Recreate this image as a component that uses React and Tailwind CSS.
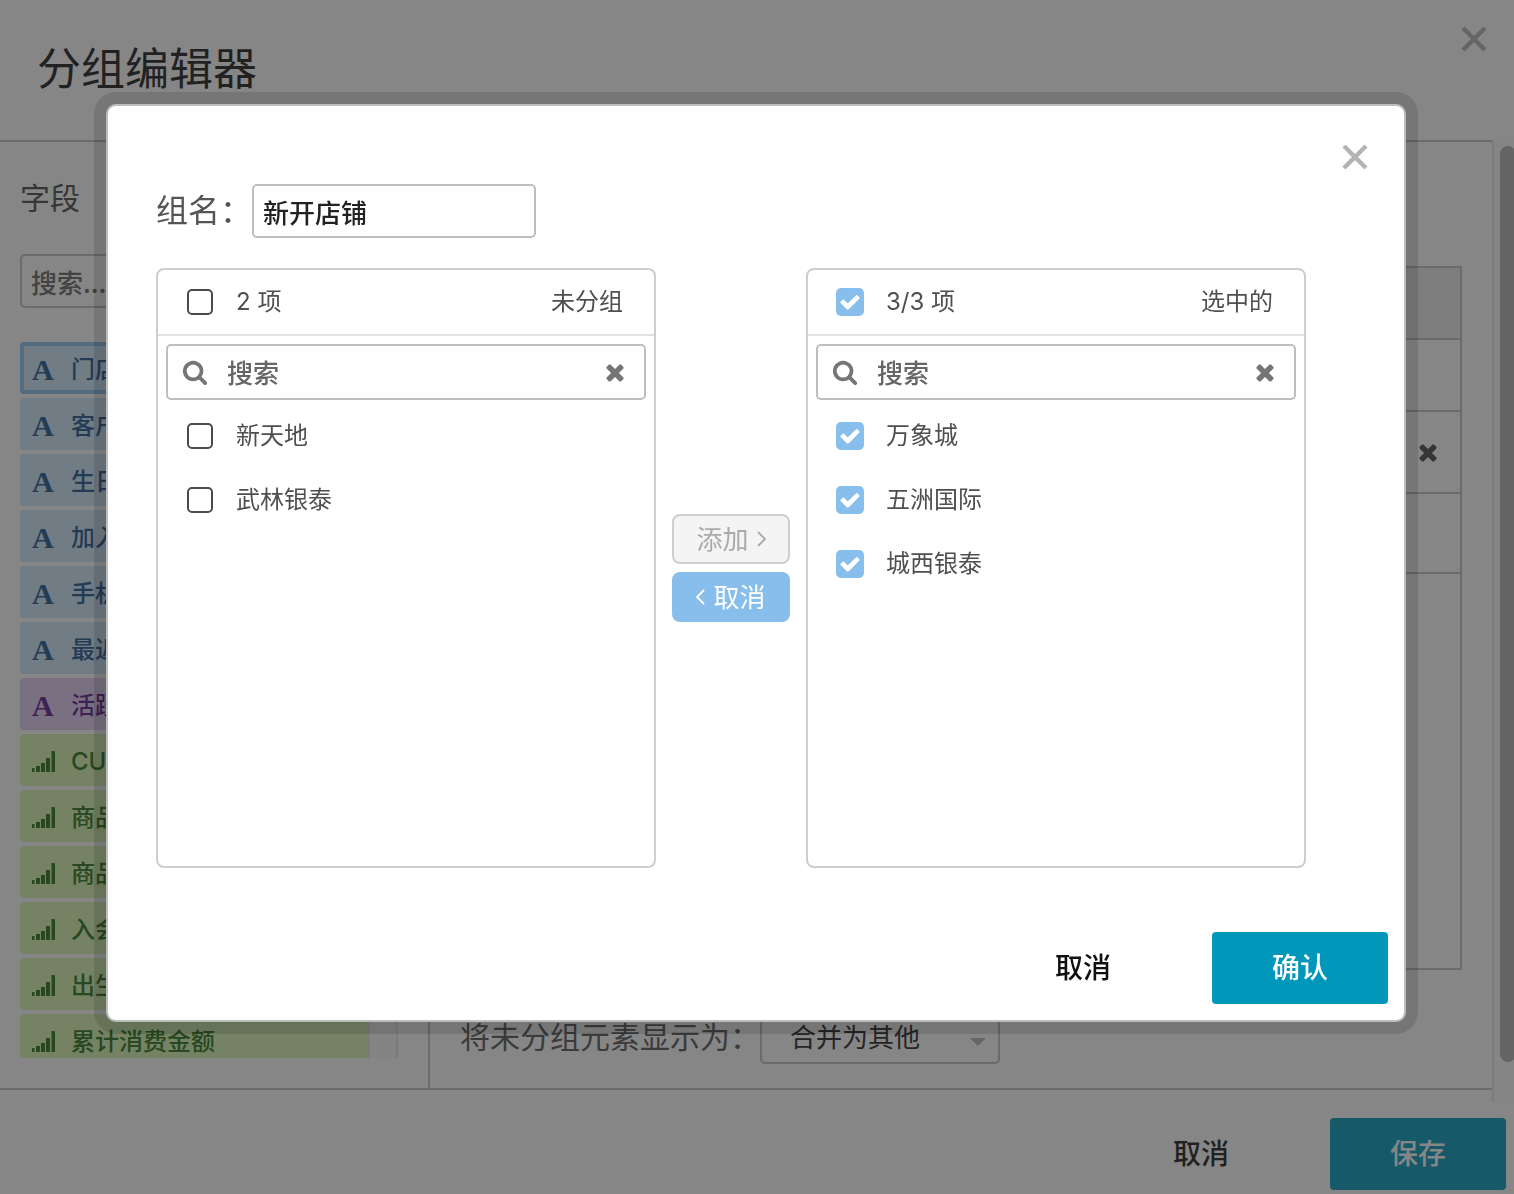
import React, { useState } from "react";

const fields = [
  { name: "门店", type: "text", active: true },
  { name: "客户", type: "text" },
  { name: "生日", type: "text" },
  { name: "加入", type: "text" },
  { name: "手机", type: "text" },
  { name: "最近", type: "text" },
  { name: "活跃", type: "group" },
  { name: "CUS", type: "number" },
  { name: "商品", type: "number" },
  { name: "商品", type: "number" },
  { name: "入会", type: "number" },
  { name: "出生", type: "number" },
  { name: "累计消费金额", type: "number" },
];

const fieldStyles = {
  text: "bg-[#cfe8fc] text-[#205691]",
  group: "bg-[#e1cdf5] text-[#5b1788]",
  number: "bg-[#d8f8b1] text-[#277217]",
};

const CloseIcon = () => (
  <svg className="size-7" viewBox="0 0 28 28" fill="none" stroke="currentColor" strokeWidth="4.5">
    <path d="M3 3l22 22M25 3L3 25" />
  </svg>
);

const TimesIcon = () => (
  <svg className="size-[26px]" viewBox="0 0 1792 1792" fill="currentColor">
    <path d="M1490 1322q0 40-28 68l-136 136q-28 28-68 28t-68-28l-294-294-294 294q-28 28-68 28t-68-28l-136-136q-28-28-28-68t28-68l294-294-294-294q-28-28-28-68t28-68l136-136q28-28 68-28t68 28l294 294 294-294q28-28 68-28t68 28l136 136q28 28 28 68t-28 68l-294 294 294 294q28 28 28 68z" />
  </svg>
);

const SearchIcon = () => (
  <svg className="size-[26px]" viewBox="0 0 1792 1792" fill="currentColor">
    <path d="M1216 832q0-185-131.5-316.5t-316.5-131.5-316.5 131.5-131.5 316.5 131.5 316.5 316.5 131.5 316.5-131.5 131.5-316.5zm512 832q0 52-38 90t-90 38q-54 0-90-38l-343-342q-179 124-399 124-143 0-273.5-55.5t-225-150-150-225-55.5-273.5 55.5-273.5 150-225 225-150 273.5-55.5 273.5 55.5 225 150 150 225 55.5 273.5q0 220-124 399l343 343q37 37 37 90z" />
  </svg>
);

const SignalIcon = () => (
  <svg className="h-[21px] w-6" viewBox="0 0 24 21" fill="currentColor">
    <rect x="0" y="17" width="2.5" height="4" />
    <rect x="4" y="15" width="4" height="6" />
    <rect x="9" y="12" width="4" height="9" />
    <rect x="14" y="7" width="4" height="14" />
    <rect x="19.5" y="0" width="3.5" height="21" />
  </svg>
);

const Chevron = ({ d }) => (
  <svg className="h-4 w-[9px]" viewBox="0 0 9 16" fill="none" stroke="currentColor" strokeWidth="1.8">
    <path d={d} />
  </svg>
);

const Checkbox = ({ checked, onChange }) => (
  <span className="grid size-7 shrink-0 place-items-center">
    <input
      type="checkbox"
      checked={checked}
      onChange={onChange}
      className="peer col-start-1 row-start-1 size-[26px] appearance-none rounded-[5px] border-2 border-[#4a4a4a] checked:size-7 checked:border-0 checked:bg-[#87beeb]"
    />
    <svg
      className="pointer-events-none col-start-1 row-start-1 hidden size-[22px] text-white peer-checked:block"
      viewBox="0 0 1792 1792"
      fill="currentColor"
    >
      <path d="M1671 566q0 40-28 68l-724 724-136 136q-28 28-68 28t-68-28l-136-136-362-362q-28-28-28-68t28-68l136-136q28-28 68-28t68 28l294 295 656-657q28-28 68-28t68 28l136 136q28 28 28 68z" />
    </svg>
  </span>
);

const FieldItem = ({ field }) => (
  <li
    className={`flex h-[52px] shrink-0 items-center rounded-sm border-4 pt-[3px] pl-2 text-2xl font-medium ${fieldStyles[field.type]} ${
      field.active ? "border-[#8bc3f0]" : "border-transparent"
    }`}
  >
    <span className="flex w-[39px] shrink-0 items-center">
      {field.type === "number" ? (
        <SignalIcon />
      ) : (
        <span className="font-['Liberation_Serif',serif] text-[30px] leading-8 font-bold">A</span>
      )}
    </span>
    {field.name}
  </li>
);

const TransferPanel = ({ title, items, selected, setSelected }) => {
  const [query, setQuery] = useState("");
  const allChecked = items.length > 0 && selected.length === items.length;
  const count = selected.length ? `${selected.length}/${items.length}` : items.length;

  const toggle = (item) =>
    setSelected(selected.includes(item) ? selected.filter((i) => i !== item) : [...selected, item]);

  return (
    <section className="h-[600px] flex-1 rounded-lg border-2 border-[#cecece] text-2xl text-[#4f4f4f]">
      <div className="flex h-[66px] items-center justify-between border-b-2 border-[#e2e2e2] pr-[31px] pl-7">
        <label className="flex items-center gap-[22px]">
          <Checkbox checked={allChecked} onChange={() => setSelected(allChecked ? [] : items)} />
          {count} 项
        </label>
        <h2>{title}</h2>
      </div>
      <div className="mx-2 mt-2 flex h-14 items-center rounded-[5px] border-2 border-[#bebebe] pr-4 pl-3.5 text-[#757575]">
        <SearchIcon />
        <input
          type="text"
          aria-label="搜索"
          placeholder="搜索"
          value={query}
          onChange={(e) => setQuery(e.target.value)}
          className="ml-[19px] min-w-0 flex-1 font-['Noto_Sans_CJK_SC',sans-serif] text-[26px] font-medium outline-none placeholder:text-[#666]"
        />
        <button type="button" aria-label="清除" onClick={() => setQuery("")}>
          <TimesIcon />
        </button>
      </div>
      <ul className="mt-1">
        {items
          .filter((item) => item.includes(query))
          .map((item) => (
            <li key={item}>
              <label className="flex h-16 items-center gap-[22px] pl-7">
                <Checkbox checked={selected.includes(item)} onChange={() => toggle(item)} />
                {item}
              </label>
            </li>
          ))}
      </ul>
    </section>
  );
};

const GroupModal = () => {
  const [name, setName] = useState("新开店铺");
  const [left, setLeft] = useState(["新天地", "武林银泰"]);
  const [right, setRight] = useState(["万象城", "五洲国际", "城西银泰"]);
  const [leftSelected, setLeftSelected] = useState([]);
  const [rightSelected, setRightSelected] = useState(right);

  const addToGroup = () => {
    setRight([...right, ...leftSelected]);
    setLeft(left.filter((i) => !leftSelected.includes(i)));
    setLeftSelected([]);
  };

  const removeFromGroup = () => {
    setLeft([...left, ...rightSelected]);
    setRight(right.filter((i) => !rightSelected.includes(i)));
    setRightSelected([]);
  };

  return (
    <div
      role="dialog"
      aria-label="分组"
      className="w-full max-w-[1300px] rounded-[10px] border-2 border-[#bdbdbd] bg-white shadow-[0_0_0_12px_rgba(0,0,0,0.12)]"
    >
      <div className="flex h-[78px] items-start justify-end pt-[37px] pr-[35px]">
        <button type="button" aria-label="关闭" className="text-[#b4b4b4]">
          <CloseIcon />
        </button>
      </div>
      <div className="flex items-center px-12">
        <label htmlFor="group-name" className="text-[32px] leading-[54px] text-[#555]">
          组名：
        </label>
        <input
          id="group-name"
          type="text"
          value={name}
          onChange={(e) => setName(e.target.value)}
          className="h-[54px] w-[284px] rounded-[5px] border-2 border-[#bebebe] px-[9px] font-['Noto_Sans_CJK_SC',sans-serif] text-[26px] font-medium text-[#222]"
        />
      </div>
      <div className="mt-[30px] flex items-center pr-[98px] pl-12">
        <TransferPanel title="未分组" items={left} selected={leftSelected} setSelected={setLeftSelected} />
        <div className="mx-4 flex w-[118px] flex-col gap-2 text-[26px]">
          <button
            type="button"
            disabled={!leftSelected.length}
            onClick={addToGroup}
            className="flex h-[50px] items-center justify-center gap-2 rounded-lg border-2 border-[#cecece] bg-[#f4f4f4] text-[#aaa]"
          >
            添加
            <Chevron d="M1 1l7 7-7 7" />
          </button>
          <button
            type="button"
            disabled={!rightSelected.length}
            onClick={removeFromGroup}
            className="flex h-[50px] items-center justify-center gap-2 rounded-lg bg-[#87beeb] text-white"
          >
            <Chevron d="M8 1L1 8l7 7" />
            取消
          </button>
        </div>
        <TransferPanel title="选中的" items={right} selected={rightSelected} setSelected={setRightSelected} />
      </div>
      <div className="mt-16 flex justify-end gap-[41px] px-4 pb-4 text-[28px] font-medium">
        <button type="button" className="h-[72px] w-44 text-[#111]">
          取消
        </button>
        <button type="button" className="h-[72px] w-44 rounded bg-[#0097ba] text-white">
          确认
        </button>
      </div>
    </div>
  );
};

const App = () => {
  return (
    <div className="flex min-h-screen flex-col overflow-hidden bg-white font-['Inter','Noto_Sans_CJK_SC',sans-serif] text-[#4a4a4a]">
      <header className="flex h-[140px] items-start justify-between pr-[26px] pl-[37px]">
        <h1 className="mt-9 text-[44px] leading-[66px] text-[#1a1a1a]">分组编辑器</h1>
        <button type="button" aria-label="关闭" className="mt-[25px] text-[#b4b4b4]">
          <CloseIcon />
        </button>
      </header>

      <div className="flex h-[962px]">
        <main className="flex h-[950px] min-w-0 flex-1 border-y-2 border-[#c1c1c1]">
          <aside className="w-[430px] shrink-0 border-r-2 border-[#c1c1c1] pt-8 pr-[30px] pl-5">
            <h2 className="text-[30px] leading-12">字段</h2>
            <input
              type="text"
              aria-label="搜索字段"
              placeholder="搜索..."
              className="mt-8 h-[54px] w-full rounded-[5px] border-2 border-[#c1c1c1] px-[9px] font-['Noto_Sans_CJK_SC',sans-serif] text-[26px] font-medium placeholder:text-[#666]"
            />
            <div className="mt-[34px] flex h-[716px] overflow-hidden">
              <ul className="flex flex-1 flex-col gap-1">
                {fields.map((field, i) => (
                  <FieldItem key={i} field={field} />
                ))}
              </ul>
              <div className="w-[30px] border-x-2 border-[#e5e5e5] bg-[#fafafa]" />
            </div>
          </aside>

          <section className="flex min-w-0 flex-1 flex-col pt-[124px] pr-[30px] pb-6 pl-[30px]">
            <div className="h-[704px] border-2 border-[#c1c1c1]">
              <div className="h-[72px] border-b-2 border-[#c1c1c1] bg-[#ededed]" />
              <div className="h-[72px] border-b-2 border-[#c1c1c1]" />
              <div className="flex h-[82px] items-center justify-end border-b-2 border-[#c1c1c1] pr-[19px]">
                <button type="button" aria-label="删除">
                  <TimesIcon />
                </button>
              </div>
              <div className="h-20 border-b-2 border-[#c1c1c1]" />
            </div>
            <div className="mt-10 flex items-center">
              <label htmlFor="ungrouped" className="text-[30px] text-[#555]">
                将未分组元素显示为：
              </label>
              <div className="relative">
                <select
                  id="ungrouped"
                  className="h-[54px] w-60 appearance-none rounded-[5px] border-2 border-[#c1c1c1] pl-7 text-[26px] text-[#222]"
                >
                  <option>合并为其他</option>
                </select>
                <svg
                  className="pointer-events-none absolute right-3.5 bottom-[18px] h-2 w-4 text-[#b4b4b4]"
                  viewBox="0 0 16 8"
                  fill="currentColor"
                >
                  <path d="M0 0h16L8 8z" />
                </svg>
              </div>
            </div>
          </section>
        </main>
        <div className="w-[22px] shrink-0 overflow-hidden border-l-2 border-[#e5e5e5] bg-[#fcfcfc] pt-1.5 pl-1.5">
          <div className="h-[916px] w-4 rounded-full bg-[#b4b4b4]" />
        </div>
      </div>

      <footer className="flex justify-end gap-[41px] px-2 pt-4 pb-1 text-[28px] font-medium">
        <button type="button" className="h-[72px] w-44 text-[#1a1a1a]">
          取消
        </button>
        <button type="button" className="h-[72px] w-44 rounded bg-[#0099bb] text-white">
          保存
        </button>
      </footer>

      <div className="fixed inset-0 flex items-start justify-center bg-[rgba(39,39,39,0.56)] pt-[104px] pr-0.5">
        <GroupModal />
      </div>
    </div>
  );
};

export default App;
